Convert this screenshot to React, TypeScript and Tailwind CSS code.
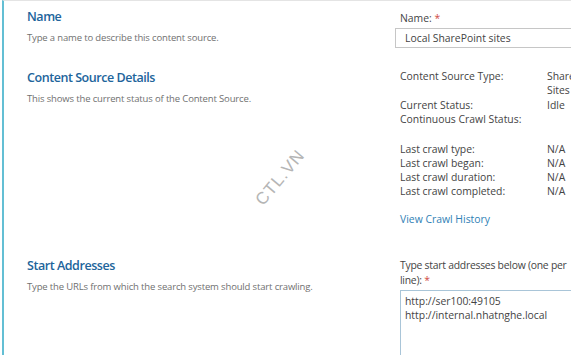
import React from "react";

const font = { fontFamily: '"Open Sans", "Noto Sans", sans-serif' };

function Section({
  title,
  desc,
  children,
  className,
}: {
  title: string;
  desc: string;
  children: React.ReactNode;
  className?: string;
}) {
  return (
    <div className={`grid grid-cols-[373px_260px] ${className ?? ""}`}>
      <div>
        <h3 className="text-[12.5px] font-semibold leading-[16px] text-[#21649b] tracking-[-0.45px]">{title}</h3>
        <p className="mt-[7px] text-[9.5px] leading-[12px] text-[#707070] tracking-[-0.15px]">{desc}</p>
      </div>
      <div>{children}</div>
    </div>
  );
}

function Row({ label, value, value2 }: { label: string; value?: string; value2?: string }) {
  return (
    <div className="grid grid-cols-[147px_1fr] leading-[14px]">
      <span>{label}</span>
      <span>
        {value}
        {value2 && <br />}
        {value2}
      </span>
    </div>
  );
}

export default function App() {
  return (
    <div className="relative w-[571px] h-[355px] overflow-hidden bg-white" style={font}>
      <div className="h-full ml-[2px] border-l-2 border-[#63bfd4] border-t border-t-[#e4e4e4]">
        <div className="pl-[23px] pt-[8px]">
          <Section title="Name" desc="Type a name to describe this content source.">
            <div className="pt-[3px] text-[10.4px] text-[#444]">
              <div className="leading-[13px]">
                Name: <span className="text-[#d04a3f]">*</span>
              </div>
              <div className="mt-[3px] ml-[-5px] h-[20px] border border-[#c6c6c6] px-[9px] leading-[18px]">
                Local SharePoint sites
              </div>
            </div>
          </Section>

          <Section title="Content Source Details" desc="This shows the current status of the Content Source." className="mt-[22px]">
            <div className="-mt-[1px] text-[10.4px] text-[#444]">
              <Row label="Content Source Type:" value="SharePoint" value2="Sites" />
              <div className="mt-[1px]">
                <Row label="Current Status:" value="Idle" />
                <Row label="Continuous Crawl Status:" />
              </div>
              <div className="mt-[16px]">
                <Row label="Last crawl type:" value="N/A" />
                <Row label="Last crawl began:" value="N/A" />
                <Row label="Last crawl duration:" value="N/A" />
                <Row label="Last crawl completed:" value="N/A" />
              </div>
              <div className="mt-[14px] leading-[14px] text-[#2f7fb5]">View Crawl History</div>
            </div>
          </Section>

          <Section title="Start Addresses" desc="Type the URLs from which the search system should start crawling." className="mt-[32px]">
            <div className="text-[10.4px] text-[#444]">
              <div className="w-[186px] leading-[15px] tracking-[-0.25px]">
                Type start addresses below (one per line): <span className="text-[#d04a3f]">*</span>
              </div>
              <div className="mt-[2px] h-[80px] border border-[#a9c5d8] px-[4px] py-[3px] leading-[14px]">
                http://ser100:49105
                <br />
                http://internal.nhatnghe.local
              </div>
            </div>
          </Section>
        </div>
      </div>

      <div className="absolute left-[247px] top-[165px] -rotate-[50deg] text-[17px] tracking-[1px] text-[#b5b5b5]" style={{ fontFamily: '"Liberation Sans", Arial, sans-serif' }}>
        CTL.VN
      </div>
    </div>
  );
}
